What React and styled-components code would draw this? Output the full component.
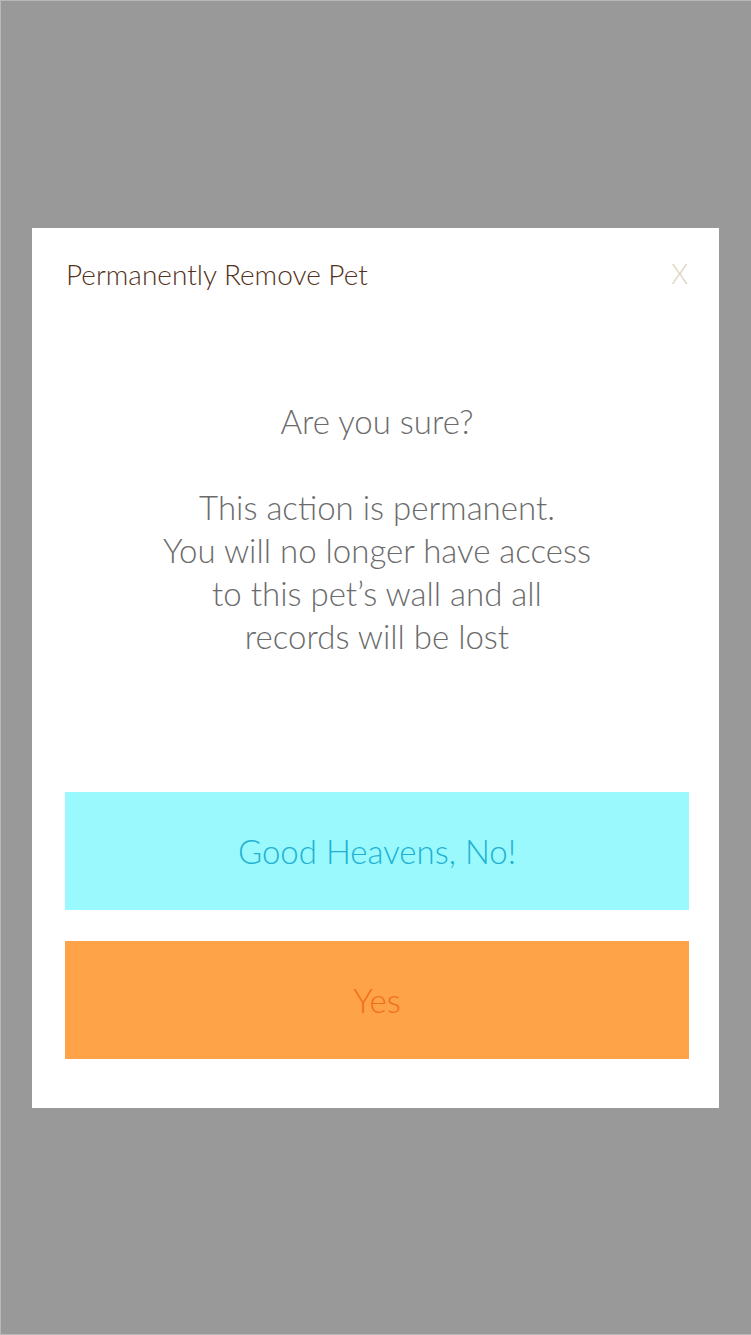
import React from "react";
import styled, { createGlobalStyle } from "styled-components";

const GlobalStyle = createGlobalStyle`
  html, body {
    margin: 0;
    padding: 0;
    background: #999999;
  }
  body {
    font-family: Lato, "Open Sans", sans-serif;
  }
`;

const Overlay = styled.div`
  width: 751px;
  height: 1335px;
  background: #999999;
  box-shadow: inset 1px 1px 0 #b8b8b8, inset 0 -1px 0 #b8b8b8;
  display: flex;
  align-items: center;
  justify-content: center;
`;

const Modal = styled.div`
  box-sizing: border-box;
  width: 687px;
  height: 880px;
  background: #ffffff;
  padding: 29px 30px 49px 33px;
  display: flex;
  flex-direction: column;
`;

const Header = styled.div`
  display: flex;
  align-items: center;
  justify-content: space-between;
  height: 34px;
`;

const Title = styled.h2`
  margin: 0 0 0 1px;
  font-weight: 300;
  font-size: 28px;
  line-height: 34px;
  color: #52321a;
`;

const Close = styled.button`
  border: 0;
  background: none;
  padding: 0;
  margin-right: 1px;
  font-family: inherit;
  font-weight: 300;
  font-size: 27px;
  line-height: 34px;
  color: #ddd6bf;
  cursor: pointer;
`;

const Message = styled.p`
  margin: 109px 0 0;
  text-align: center;
  font-weight: 300;
  font-size: 33px;
  line-height: 43px;
  color: #6b6b6b;
`;

const Actions = styled.div`
  margin-top: auto;
  display: flex;
  flex-direction: column;
  gap: 31px;
`;

const ActionButton = styled.button`
  height: 118px;
  border: 0;
  width: 100%;
  font-family: inherit;
  font-weight: 300;
  font-size: 33px;
  background: ${(p) => (p.$tone === "safe" ? "#99f9fd" : "#ffa348")};
  color: ${(p) => (p.$tone === "safe" ? "#22b1d3" : "#f06f1c")};
  cursor: pointer;
`;

const App = () => {
  return (
    <>
      <GlobalStyle />
      <Overlay>
        <Modal>
          <Header>
            <Title>Permanently Remove Pet</Title>
            <Close>X</Close>
          </Header>
          <Message>
            Are you sure?
            <br />
            <br />
            This action is permanent.
            <br />
            You will no longer have access
            <br />
            to this pet’s wall and all
            <br />
            records will be lost
          </Message>
          <Actions>
            <ActionButton $tone="safe">Good Heavens, No!</ActionButton>
            <ActionButton $tone="danger">Yes</ActionButton>
          </Actions>
        </Modal>
      </Overlay>
    </>
  );
};

export default App;
